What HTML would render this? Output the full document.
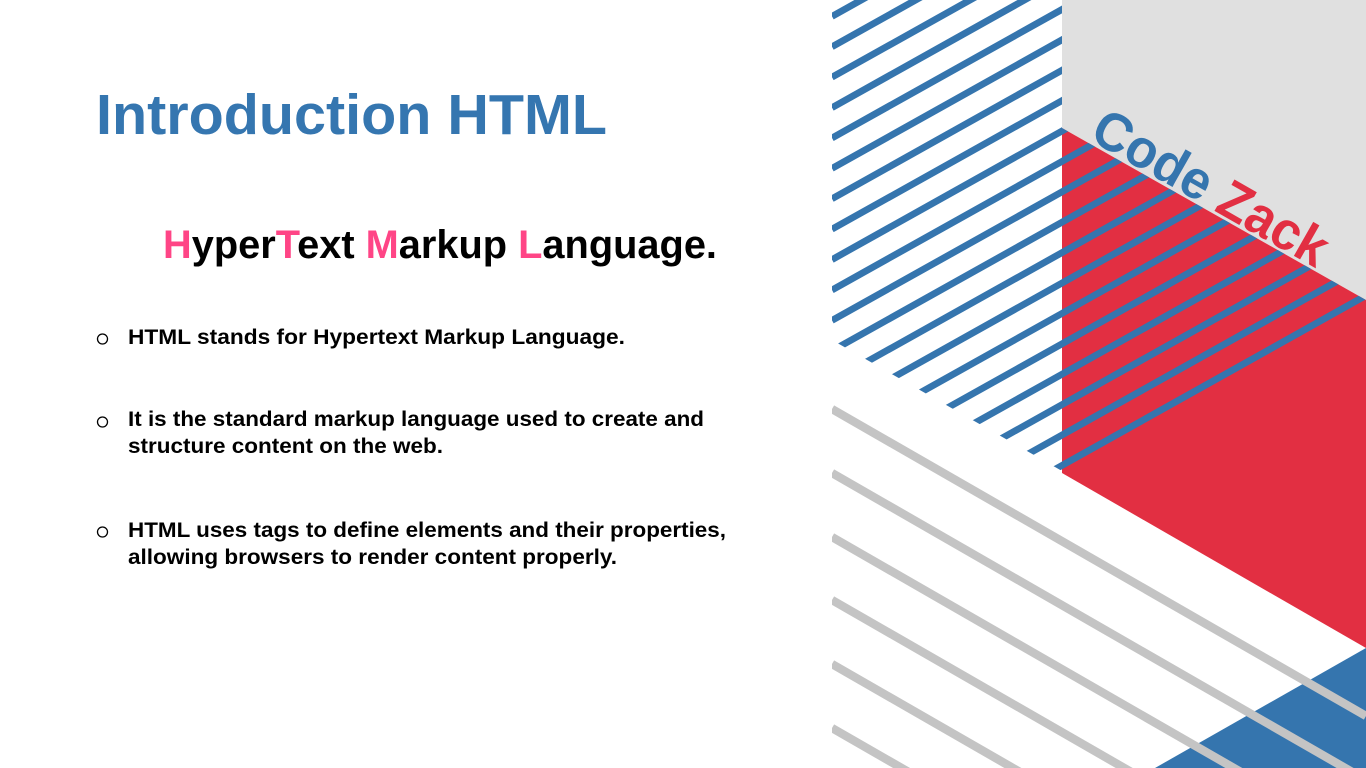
<!DOCTYPE html>
<html><head><meta charset="utf-8"><style>
html,body{margin:0;padding:0;background:#fff;overflow:hidden;width:1366px;height:768px;}
svg{display:block}
</style></head><body>
<svg width="1366" height="768" viewBox="0 0 1366 768" xmlns="http://www.w3.org/2000/svg">
<defs>
<clipPath id="bc"><polygon points="832,0 1062,0 1062,128 1366,300 1366,768 1062,471 832,340"/></clipPath>
<clipPath id="rc"><rect x="832" y="0" width="534" height="768"/></clipPath>
</defs>
<rect width="1366" height="768" fill="#fff"/>
<polygon points="1062,0 1366,0 1366,300 1062,128" fill="#e0e0e0"/>
<polygon points="1062,128 1366,300 1366,648 1062,473" fill="#e22f42"/>
<polygon points="1366,648 1366,768 1155,768" fill="#3575ae"/>
<g clip-path="url(#bc)" stroke="#3575ae" stroke-width="6.8">
<line x1="832" y1="594" x2="1366" y2="295.5"/>
<line x1="832" y1="563.6" x2="1366" y2="265.1"/>
<line x1="832" y1="533.2" x2="1366" y2="234.7"/>
<line x1="832" y1="502.8" x2="1366" y2="204.3"/>
<line x1="832" y1="472.4" x2="1366" y2="173.9"/>
<line x1="832" y1="442" x2="1366" y2="143.5"/>
<line x1="832" y1="411.6" x2="1366" y2="113.1"/>
<line x1="832" y1="381.2" x2="1366" y2="82.7"/>
<line x1="832" y1="350.8" x2="1366" y2="52.3"/>
<line x1="832" y1="320.4" x2="1366" y2="21.9"/>
<line x1="832" y1="290" x2="1366" y2="-8.5"/>
<line x1="832" y1="259.6" x2="1366" y2="-38.9"/>
<line x1="832" y1="229.2" x2="1366" y2="-69.3"/>
<line x1="832" y1="198.8" x2="1366" y2="-99.7"/>
<line x1="832" y1="168.4" x2="1366" y2="-130.1"/>
<line x1="832" y1="138" x2="1366" y2="-160.5"/>
<line x1="832" y1="107.6" x2="1366" y2="-190.9"/>
<line x1="832" y1="77.2" x2="1366" y2="-221.3"/>
<line x1="832" y1="46.8" x2="1366" y2="-251.7"/>
<line x1="832" y1="16.4" x2="1366" y2="-282.1"/>
<line x1="832" y1="-14" x2="1366" y2="-312.5"/>
</g>
<g clip-path="url(#rc)" stroke="#c4c4c4" stroke-width="8.5">
<line x1="832" y1="409" x2="1366" y2="716"/>
<line x1="832" y1="473" x2="1366" y2="780"/>
<line x1="832" y1="537" x2="1366" y2="844"/>
<line x1="832" y1="600" x2="1366" y2="907"/>
<line x1="832" y1="664" x2="1366" y2="971"/>
<line x1="832" y1="728" x2="1366" y2="1035"/>
</g>
<text transform="translate(1088,139) rotate(29.6)" font-family="Liberation Sans, sans-serif" font-weight="bold" font-size="54" textLength="262" lengthAdjust="spacingAndGlyphs"><tspan fill="#3575ae">Code</tspan><tspan fill="#e22f42"> Zack</tspan></text>

<g font-family="Liberation Sans, sans-serif" font-weight="bold">
<text x="96" y="134" font-size="57" fill="#3576b0" textLength="511" lengthAdjust="spacingAndGlyphs">Introduction HTML</text>
<text x="163" y="258" font-size="40" fill="#000" textLength="554" lengthAdjust="spacingAndGlyphs"><tspan fill="#ff4586">H</tspan>yper<tspan fill="#ff4586">T</tspan>ext <tspan fill="#ff4586">M</tspan>arkup <tspan fill="#ff4586">L</tspan>anguage.</text>
<g font-size="21" fill="#000">
<text x="128" y="344" textLength="497" lengthAdjust="spacingAndGlyphs">HTML stands for Hypertext Markup Language.</text>
<text x="128" y="426" textLength="576" lengthAdjust="spacingAndGlyphs">It is the standard markup language used to create and</text>
<text x="128" y="453" textLength="315" lengthAdjust="spacingAndGlyphs">structure content on the web.</text>
<text x="128" y="537" textLength="598" lengthAdjust="spacingAndGlyphs">HTML uses tags to define elements and their properties,</text>
<text x="128" y="564" textLength="489" lengthAdjust="spacingAndGlyphs">allowing browsers to render content properly.</text>
</g>
</g>
<g fill="none" stroke="#000" stroke-width="1.3">
<ellipse cx="102.5" cy="339" rx="5" ry="5"/>
<ellipse cx="102.5" cy="422" rx="5" ry="5"/>
<ellipse cx="102.5" cy="532" rx="5" ry="5"/>
</g>
</svg>
</body></html>
